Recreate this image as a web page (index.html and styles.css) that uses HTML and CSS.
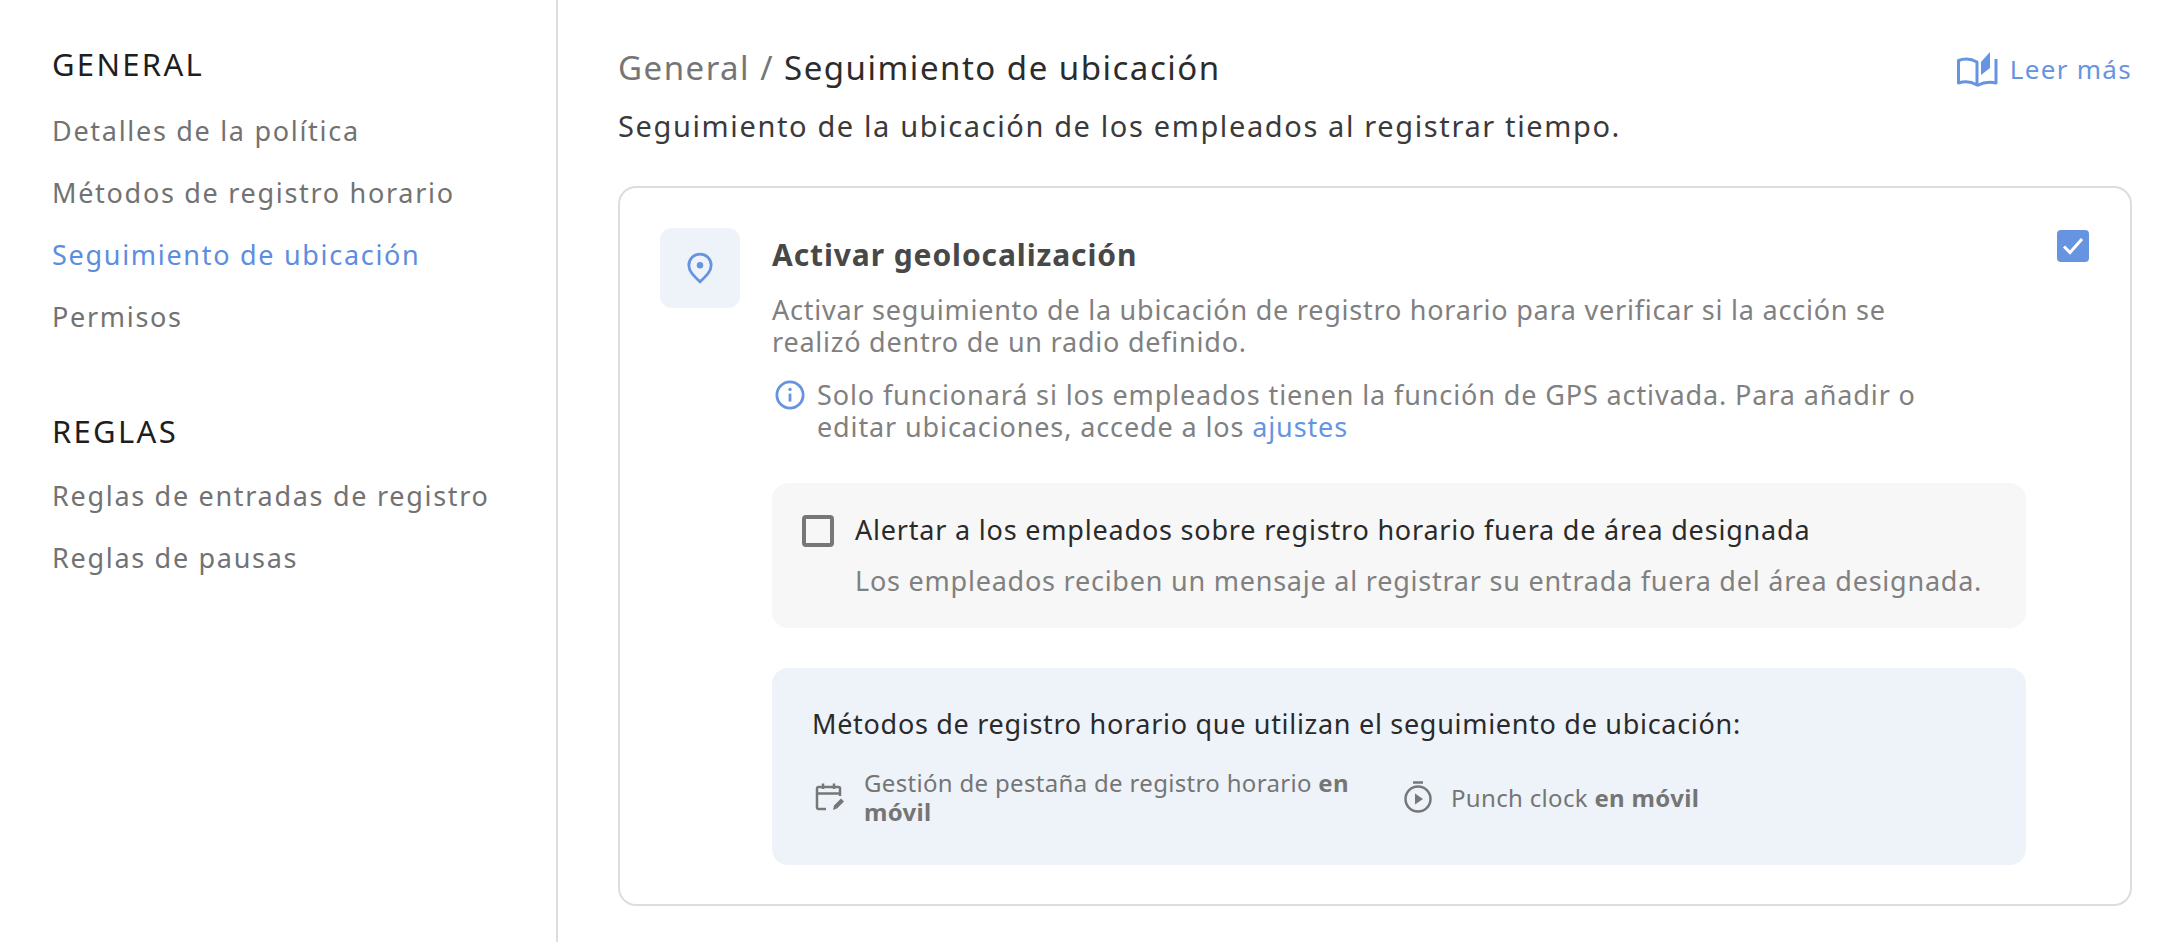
FILE: index.html
```html
<!DOCTYPE html>
<html lang="es">
<head>
    <meta charset="UTF-8">
    <title>Seguimiento de ubicación</title>
    <link rel="stylesheet" href="styles.css">
</head>
<body>
    <div class="layout">
        <nav class="sidebar">
            <h3 class="nav-title">GENERAL</h3>
            <a class="nav-link">Detalles de la política</a>
            <a class="nav-link">Métodos de registro horario</a>
            <a class="nav-link active">Seguimiento de ubicación</a>
            <a class="nav-link">Permisos</a>
            <h3 class="nav-title second">REGLAS</h3>
            <a class="nav-link">Reglas de entradas de registro</a>
            <a class="nav-link">Reglas de pausas</a>
        </nav>

        <main class="main">
            <div class="top-row">
                <div class="crumbs"><span class="crumb-parent">General / </span>Seguimiento de ubicación</div>
                <a class="read-more">
                    <svg width="41" height="35" viewBox="0 0 41 35" fill="none">
                        <path d="M1.500 8.500C8 6 14 6.500 20 10V33C14 29.500 8 29 1.500 31V8.500z" stroke="#6694e0" stroke-width="3" stroke-linejoin="round"/>
                        <path d="M39 7V31C33 29.500 27 30 20 33.500" stroke="#6694e0" stroke-width="3" stroke-linejoin="round"/>
                        <path d="M24 10L33 0V16L24 23V10z" fill="#6694e0"/>
                    </svg>
                    Leer más
                </a>
            </div>
            <p class="subtitle">Seguimiento de la ubicación de los empleados al registrar tiempo.</p>

            <section class="card">
                <div class="pin-box">
                    <svg width="26" height="32" viewBox="0 0 28 34" fill="none">
                        <path d="M14 32C8 26 2 21 2 14a12 12 0 0 1 24 0c0 7-6 12-12 18z" stroke="#6694e0" stroke-width="3" stroke-linejoin="round"/>
                        <circle cx="14" cy="14" r="3.500" fill="#6694e0"/>
                    </svg>
                </div>
                <div class="card-body">
                    <h2 class="card-title">Activar geolocalización</h2>
                    <p class="card-desc">Activar seguimiento de la ubicación de registro horario para verificar si la acción se realizó dentro de un radio definido.</p>
                    <div class="info-row">
                        <svg class="info-icon" width="30" height="30" viewBox="0 0 32 32" fill="none">
                            <circle cx="16" cy="16" r="14" stroke="#6694e0" stroke-width="3"/>
                            <circle cx="16" cy="10" r="1.800" fill="#6694e0"/>
                            <path d="M16 14.500V23" stroke="#6694e0" stroke-width="3"/>
                        </svg>
                        <p class="info-text">Solo funcionará si los empleados tienen la función de GPS activada. Para añadir o editar ubicaciones, accede a los <a class="link">ajustes</a></p>
                    </div>

                    <div class="alert-box">
                        <span class="checkbox"></span>
                        <div>
                            <div class="alert-title">Alertar a los empleados sobre registro horario fuera de área designada</div>
                            <div class="alert-desc">Los empleados reciben un mensaje al registrar su entrada fuera del área designada.</div>
                        </div>
                    </div>

                    <div class="methods-box">
                        <div class="methods-title">Métodos de registro horario que utilizan el seguimiento de ubicación:</div>
                        <div class="methods-row">
                            <div class="method method-wide">
                                <svg width="32" height="32" viewBox="0 0 32 32" fill="none">
                                    <path d="M12 28H4.500A1.500 1.500 0 0 1 3 26.500V7.500A1.500 1.500 0 0 1 4.500 6h20A1.500 1.500 0 0 1 26 7.500V15" stroke="#777" stroke-width="2.500"/>
                                    <path d="M3 12.500h23M9 2.500V8M20 2.500V8" stroke="#777" stroke-width="2.500"/>
                                    <path d="M19 29l1-4.500 7-7 3 3-7 7-4 1.500z" fill="#777"/>
                                </svg>
                                <span>Gestión de pestaña de registro horario <b>en móvil</b></span>
                            </div>
                            <div class="method">
                                <svg width="30" height="34" viewBox="0 0 30 34" fill="none">
                                    <circle cx="15" cy="19" r="12.500" stroke="#777" stroke-width="2.500"/>
                                    <path d="M10 2.500h10" stroke="#777" stroke-width="2.500"/>
                                    <path d="M12 13.500l8 5.500-8 5.500v-11z" fill="#777"/>
                                </svg>
                                <span>Punch clock <b>en móvil</b></span>
                            </div>
                        </div>
                    </div>
                </div>
                <span class="checkbox checked">
                    <svg width="22" height="18" viewBox="0 0 22 18" fill="none">
                        <path d="M2 9.500l6 6L20 2" stroke="#fff" stroke-width="3"/>
                    </svg>
                </span>
            </section>
        </main>
    </div>
</body>
</html>
```

FILE: styles.css
```css
* {
    box-sizing: border-box;
}
body {
    margin: 0;
    background: #fff;
    color: #222;
    font-family: "Noto Sans", sans-serif;
    overflow: hidden;
}
p, h2, h3 {
    margin: 0;
}
.layout {
    display: flex;
    height: 942px;
}
.sidebar {
    width: 558px;
    flex-shrink: 0;
    padding: 44px 0 0 52px;
    border-right: 2px solid #ddd;
}
.nav-title {
    font-size: 31px;
    font-weight: 400;
    line-height: 40px;
    letter-spacing: 2.300px;
    color: #1e1e1e;
    margin-bottom: 29px;
}
.nav-title.second {
    margin-top: 76px;
    margin-bottom: 27px;
}
.nav-link {
    display: block;
    font-size: 27px;
    line-height: 36px;
    letter-spacing: 1.700px;
    color: #727272;
    margin-bottom: 26px;
    height: 36px;
}
.nav-link.active {
    color: #5c8de0;
}
.main {
    flex: 1;
    padding: 47px 36px 0 60px;
}
.top-row {
    display: flex;
    justify-content: space-between;
    align-items: center;
    height: 40px;
}
.crumbs {
    font-size: 33px;
    letter-spacing: 1.500px;
    color: #2c2c2c;
}
.crumb-parent {
    color: #757575;
}
.read-more {
    display: flex;
    align-items: center;
    gap: 12px;
    margin-top: 4px;
    font-size: 26px;
    letter-spacing: 1.300px;
    color: #6694e0;
}
.subtitle {
    margin-top: 20px;
    font-size: 29px;
    line-height: 38px;
    letter-spacing: 1.620px;
    color: #3a3a3a;
}
.card {
    display: flex;
    align-items: flex-start;
    margin-top: 41px;
    height: 720px;
    padding: 40px 40px 0 40px;
    border: 2px solid #ddd;
    border-radius: 18px;
}
.pin-box {
    display: flex;
    align-items: center;
    justify-content: center;
    width: 80px;
    height: 80px;
    flex-shrink: 0;
    background: #eef3fa;
    border-radius: 12px;
}
.card-body {
    width: 1254px;
    margin-left: 32px;
    flex-shrink: 0;
}
.card-title {
    margin-top: 7px;
    font-size: 30px;
    line-height: 40px;
    letter-spacing: 0.900px;
    font-weight: 700;
    color: #484848;
}
.card-desc {
    margin-top: 19px;
    width: 1150px;
    font-size: 27px;
    line-height: 32px;
    letter-spacing: 0.770px;
    color: #808080;
}
.info-row {
    display: flex;
    gap: 12px;
    margin-top: 21px;
    padding-left: 3px;
}
.info-icon {
    flex-shrink: 0;
    margin-top: 1px;
}
.info-text {
    width: 1130px;
    font-size: 27px;
    line-height: 32px;
    letter-spacing: 0.880px;
    color: #808080;
}
.link {
    color: #6694e0;
}
.alert-box {
    display: flex;
    gap: 21px;
    height: 145px;
    margin-top: 40px;
    padding: 29px 30px 0 30px;
    background: #f7f7f7;
    border-radius: 16px;
}
.checkbox {
    display: flex;
    align-items: center;
    justify-content: center;
    width: 32px;
    height: 32px;
    margin-top: 3px;
    flex-shrink: 0;
    border: 4px solid #777;
    border-radius: 4px;
}
.checkbox.checked {
    margin-top: 2px;
    margin-left: 31px;
    background: #6694e0;
    border: 0;
}
.alert-title {
    font-size: 27px;
    line-height: 36px;
    letter-spacing: 0.800px;
    color: #2a2a2a;
}
.alert-desc {
    margin-top: 15px;
    font-size: 27px;
    line-height: 36px;
    letter-spacing: 0.770px;
    color: #808080;
}
.methods-box {
    height: 197px;
    margin-top: 40px;
    padding: 38px 40px 0 40px;
    background: #eef3fa;
    border-radius: 16px;
}
.methods-title {
    font-size: 27px;
    line-height: 36px;
    letter-spacing: 0.700px;
    color: #2a2a2a;
}
.methods-row {
    display: flex;
    align-items: center;
    gap: 50px;
    margin-top: 26px;
}
.method {
    display: flex;
    align-items: center;
    gap: 18px;
    font-size: 24px;
    line-height: 29px;
    letter-spacing: 0.320px;
    color: #757575;
}
.method svg {
    flex-shrink: 0;
}
.method-wide {
    width: 541px;
}
.method-wide svg {
    margin-left: 2px;
}
```
